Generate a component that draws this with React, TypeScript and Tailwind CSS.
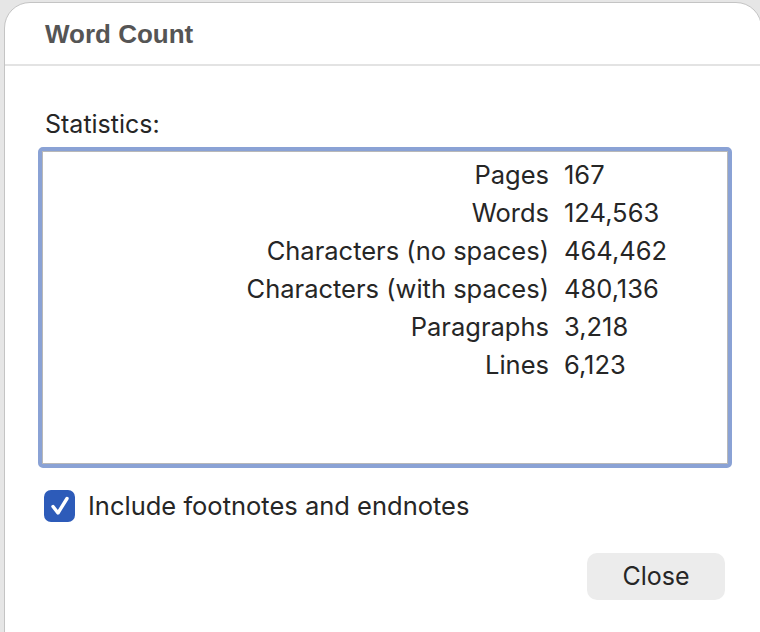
import React, { useState } from 'react';

const stats = [
  { label: 'Pages', value: '167' },
  { label: 'Words', value: '124,563' },
  { label: 'Characters (no spaces)', value: '464,462' },
  { label: 'Characters (with spaces)', value: '480,136' },
  { label: 'Paragraphs', value: '3,218' },
  { label: 'Lines', value: '6,123' },
];

const WordCountDialog: React.FC = () => {
  const [includeNotes, setIncludeNotes] = useState(true);

  return (
    <div className="w-[760px] h-[632px] overflow-hidden bg-[#e6e6e6] pt-[2px] pl-[4px]">
      <div className="w-[758px] h-[660px] bg-white rounded-[26px] border border-[#c4c4c4] font-['Inter',sans-serif] text-[#262626]">
        {/* Title bar */}
        <div className="h-[63px] border-b-2 border-[#e3e3e3] pl-[40px] pt-[16px]">
          <h1 className="font-['Liberation_Sans',sans-serif] font-bold text-[26px] leading-[30px] text-[#555555]">
            Word Count
          </h1>
        </div>

        <div className="pl-[33px] pr-[27px]">
          <p className="mt-[43px] pl-[7px] text-[25px] leading-[30px]">Statistics:</p>

          {/* Statistics list */}
          <div className="mt-[8px] w-[694px] h-[321px] rounded-[5px] border-4 border-[#8aa2d5] bg-white">
            <div className="h-full border border-[#b8b8b8] pt-[4px]">
              <div className="grid grid-cols-[506px_1fr] gap-x-[15px]">
                {stats.map(s => (
                  <React.Fragment key={s.label}>
                    <span className="text-right text-[25.5px] leading-[38px]">{s.label}</span>
                    <span className="text-[25.5px] leading-[38px]">{s.value}</span>
                  </React.Fragment>
                ))}
              </div>
            </div>
          </div>

          {/* Footnotes checkbox */}
          <label className="mt-[22px] ml-[6px] flex items-center gap-[13px] cursor-pointer">
            <span
              onClick={() => setIncludeNotes(!includeNotes)}
              className={`w-[31px] h-[32px] rounded-[7px] flex items-center justify-center ${includeNotes ? 'bg-[#2d5bb9]' : 'bg-white border border-gray-400'}`}
            >
              {includeNotes && (
                <svg width="24" height="24" viewBox="0 0 24 24" fill="none">
                  <path d="M5 12.5 L10 19 L19 4.5" stroke="white" strokeWidth="3.4" strokeLinecap="round" strokeLinejoin="round" />
                </svg>
              )}
            </span>
            <span className="text-[25.5px] leading-[30px]">Include footnotes and endnotes</span>
          </label>

          {/* Footer */}
          <div className="mt-[31px] w-[693px] flex justify-end pr-[6px]">
            <button className="w-[138px] h-[47px] rounded-[10px] bg-[#ececec] text-[25px] text-[#262626]">
              Close
            </button>
          </div>
        </div>
      </div>
    </div>
  );
};

export default function App() {
  return <WordCountDialog />;
}
